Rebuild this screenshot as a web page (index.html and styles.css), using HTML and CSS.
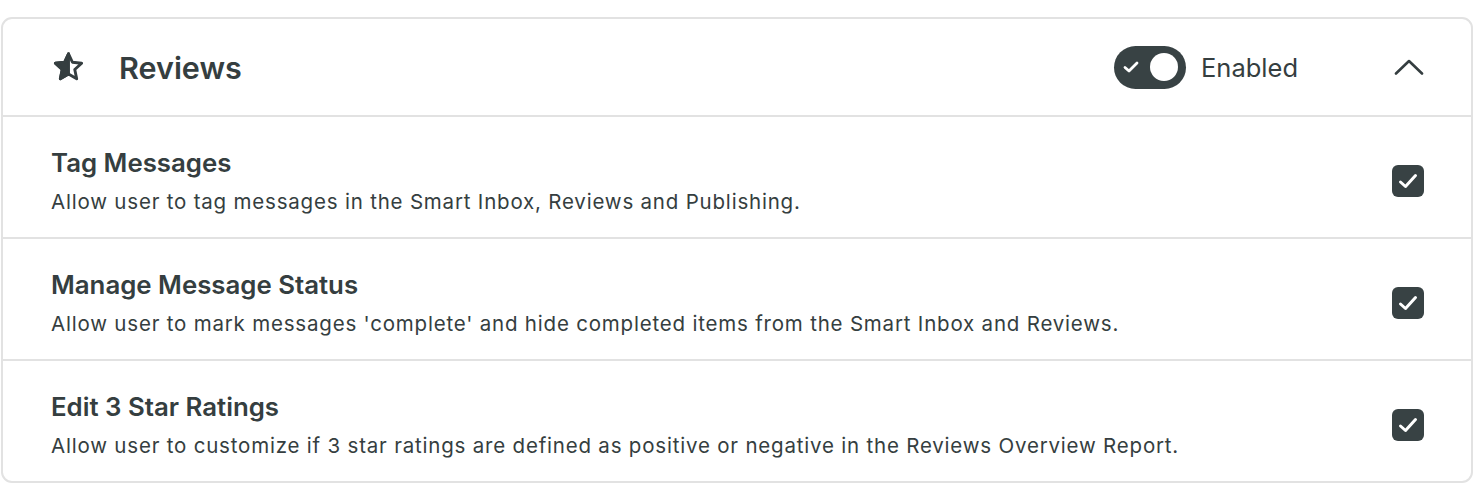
FILE: index.html
```html
<!DOCTYPE html>
<html lang="en">
<head>
<meta charset="utf-8">
<title>Reviews</title>
<link rel="stylesheet" href="styles.css">
</head>
<body>
<section class="card">
  <header class="card-header">
    <div class="header-left">
      <svg class="star-icon" viewBox="0 0 24 24" width="35" height="35" aria-hidden="true">
        <path d="M12 2.6 L14.7 8.4 L21 9.1 L16.3 13.4 L17.6 19.7 L12 16.5 L6.4 19.7 L7.7 13.4 L3 9.1 L9.3 8.4 Z" fill="none" stroke="#353e40" stroke-width="2" stroke-linejoin="round"/>
        <path d="M12 2.6 L9.3 8.4 L3 9.1 L7.7 13.4 L6.4 19.7 L12 16.5 Z" fill="#353e40" stroke="#353e40" stroke-width="2" stroke-linejoin="round"/>
      </svg>
      <h2 class="card-title">Reviews</h2>
    </div>
    <div class="header-right">
      <div class="toggle">
        <svg class="toggle-check" viewBox="0 0 16 12" width="16" height="12" aria-hidden="true">
          <path d="M2 6.5 L6 10 L14 2" fill="none" stroke="#fff" stroke-width="2.8" stroke-linecap="round" stroke-linejoin="round"/>
        </svg>
        <span class="toggle-knob"></span>
      </div>
      <span class="toggle-label">Enabled</span>
      <svg class="chevron" viewBox="0 0 30 16" width="30" height="16" aria-hidden="true">
        <path d="M2 14.5 L15 2 L28 14.5" fill="none" stroke="#353e40" stroke-width="2.6" stroke-linecap="round" stroke-linejoin="round"/>
      </svg>
    </div>
  </header>
  <div class="row">
    <div class="row-text">
      <h3 class="row-title">Tag Messages</h3>
      <p class="row-desc">Allow user to tag messages in the Smart Inbox, Reviews and Publishing.</p>
    </div>
    <span class="checkbox"><svg viewBox="0 0 22 22" width="22" height="22" aria-hidden="true"><path d="M3.5 12 L8.5 16.5 L18.5 5.5" fill="none" stroke="#fff" stroke-width="3" stroke-linecap="round" stroke-linejoin="round"/></svg></span>
  </div>
  <div class="row">
    <div class="row-text">
      <h3 class="row-title">Manage Message Status</h3>
      <p class="row-desc">Allow user to mark messages 'complete' and hide completed items from the Smart Inbox and Reviews.</p>
    </div>
    <span class="checkbox"><svg viewBox="0 0 22 22" width="22" height="22" aria-hidden="true"><path d="M3.5 12 L8.5 16.5 L18.5 5.5" fill="none" stroke="#fff" stroke-width="3" stroke-linecap="round" stroke-linejoin="round"/></svg></span>
  </div>
  <div class="row">
    <div class="row-text">
      <h3 class="row-title">Edit 3 Star Ratings</h3>
      <p class="row-desc">Allow user to customize if 3 star ratings are defined as positive or negative in the Reviews Overview Report.</p>
    </div>
    <span class="checkbox"><svg viewBox="0 0 22 22" width="22" height="22" aria-hidden="true"><path d="M3.5 12 L8.5 16.5 L18.5 5.5" fill="none" stroke="#fff" stroke-width="3" stroke-linecap="round" stroke-linejoin="round"/></svg></span>
  </div>
</section>
</body>
</html>
```
FILE: styles.css
```css
* { box-sizing: border-box; }
html, body { margin: 0; padding: 0; background: #fff; }
body {
  font-family: Inter, "Noto Sans", sans-serif;
  color: #353e40;
  padding: 17px 3px 0 1px;
}
.card {
  border: 2px solid #e2e2e2;
  border-radius: 11px;
  width: 1472px;
  overflow: hidden;
}
.card-header {
  height: 98px;
  display: flex;
  align-items: center;
  justify-content: space-between;
  padding: 0 47px 0 48px;
  border-bottom: 2px solid #e2e2e2;
}
.header-left { display: flex; align-items: center; }
.star-icon { display: block; margin-right: 33px; }
.card-title {
  margin: 0;
  font-size: 30.5px;
  font-weight: 600;
}
.header-right { display: flex; align-items: center; }
.toggle {
  width: 72px;
  height: 43px;
  border-radius: 22px;
  background: #384244;
  display: flex;
  align-items: center;
  justify-content: space-between;
  padding: 0 8px 0 9px;
}
.toggle-check { display: block; }
.toggle-knob {
  width: 28px;
  height: 28px;
  border-radius: 50%;
  background: #fff;
}
.toggle-label {
  font-size: 25.5px;
  margin-left: 15px;
  margin-right: 96px;
}
.chevron { display: block; }
.row {
  height: 122px;
  display: flex;
  align-items: center;
  justify-content: space-between;
  padding: 8px 47px 0 48px;
  border-bottom: 2px solid #e2e2e2;
}
.row:last-child { border-bottom: none; height: 120px; }
.row-title {
  margin: 0 0 10px;
  font-size: 25.8px;
  line-height: 32px;
  font-weight: 600;
}
.row-desc {
  margin: 0;
  font-size: 20.5px;
  line-height: 26px;
  letter-spacing: 0.8px;
}
.checkbox {
  width: 32px;
  height: 32px;
  border-radius: 6px;
  background: #384244;
  display: flex;
  align-items: center;
  justify-content: center;
}
.checkbox svg { display: block; }
```
